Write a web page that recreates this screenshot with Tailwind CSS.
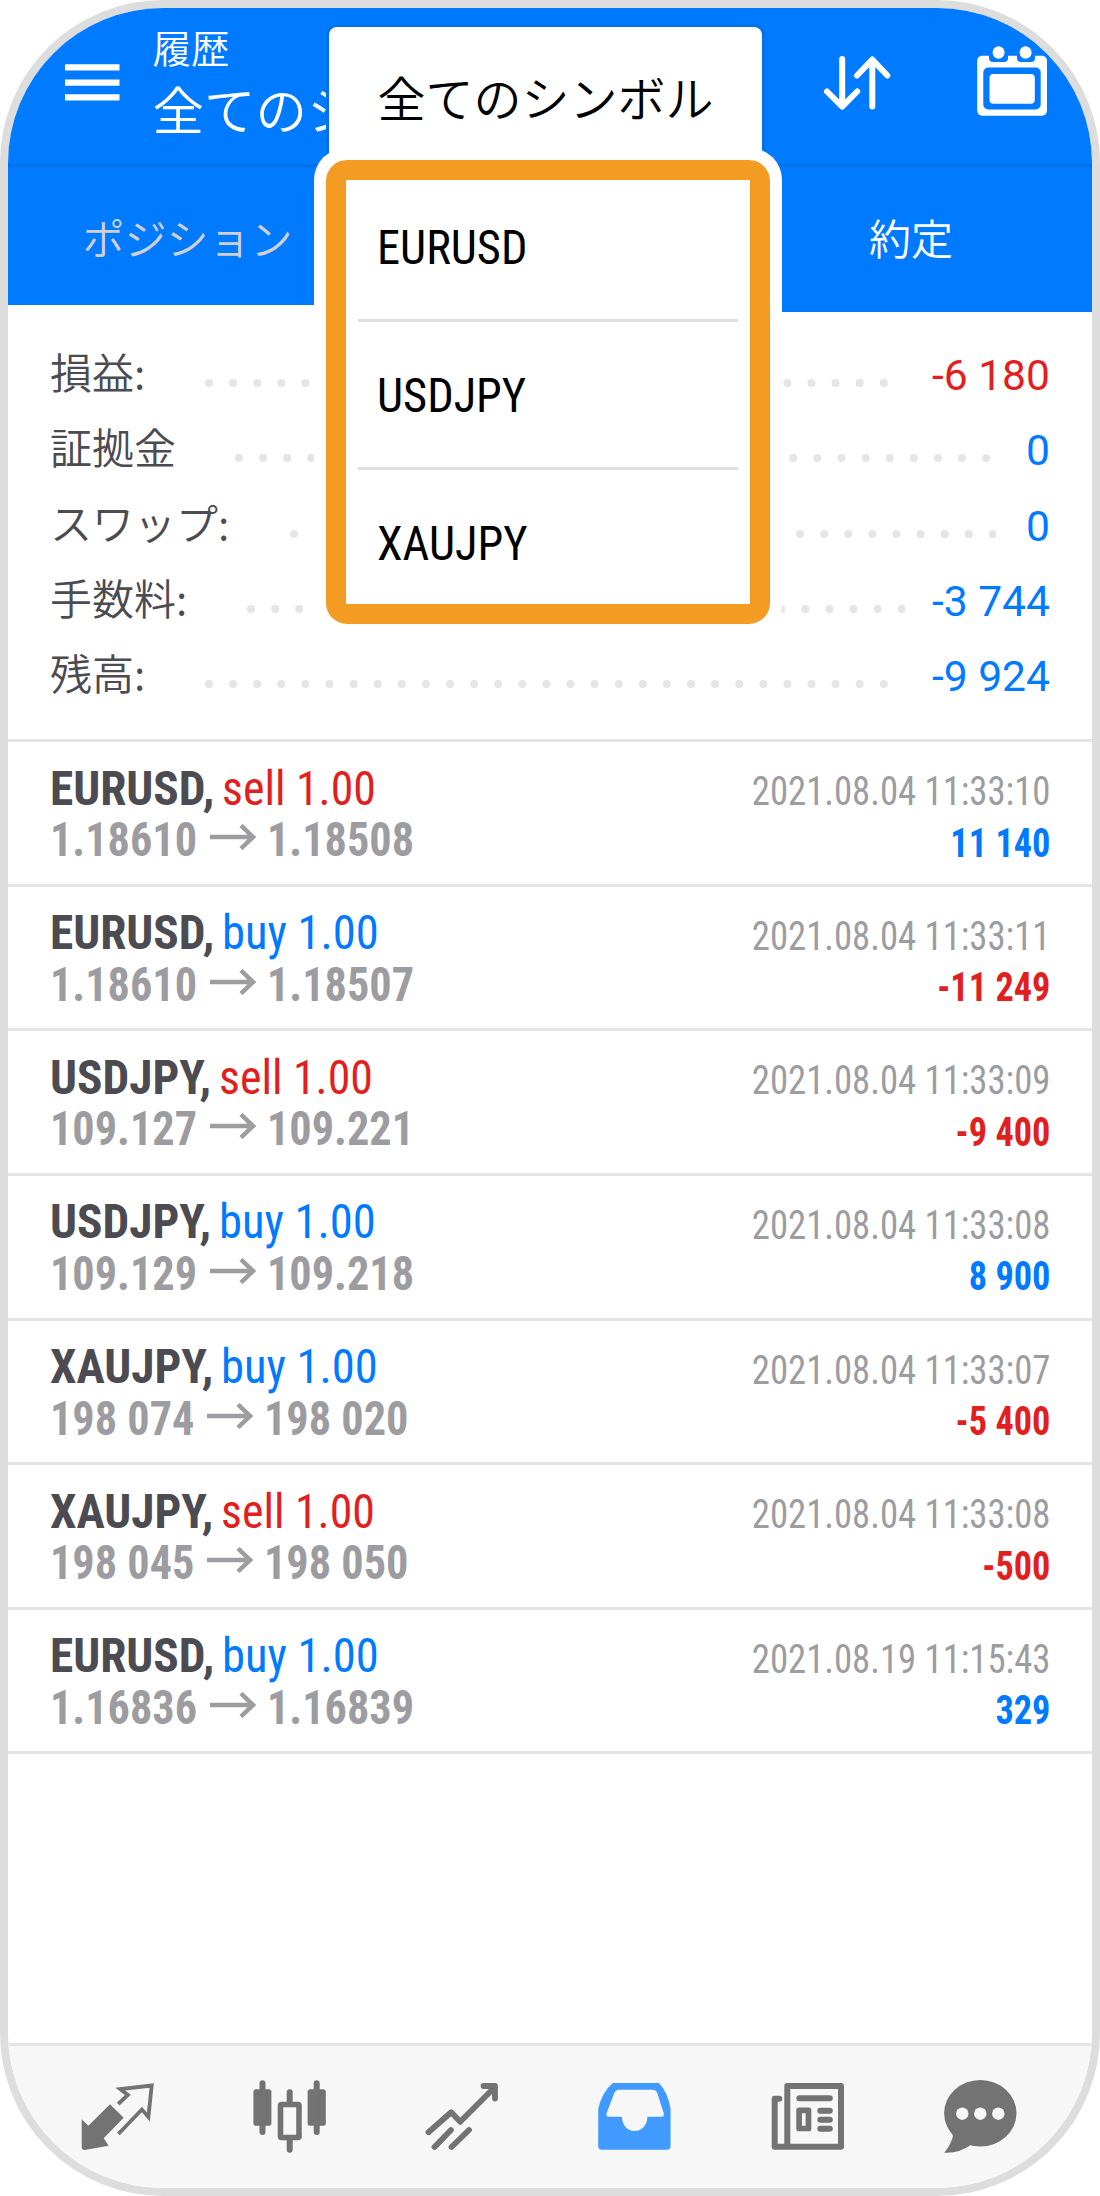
<!DOCTYPE html>
<html lang="ja">
<head>
<meta charset="utf-8">
<title>履歴</title>
<script src="https://cdn.jsdelivr.net/npm/@tailwindcss/browser@4"></script>
</head>
<body class="bg-white font-['Roboto','Noto_Sans_CJK_JP',sans-serif]">
<div class="relative flex h-[2196px] w-[1100px] flex-col overflow-hidden rounded-[163px] border-8 border-[#ddd] bg-white">

  <header class="flex h-[159px] shrink-0 border-b-3 border-[#0072ea] bg-[#007aff] text-white">
    <svg class="mt-[56px] ml-[57px] h-[38px] w-[55px] shrink-0" viewBox="0 0 55 38" fill="#fff"><path d="M0 .3h54.500v6.200H0zM0 15.500h54.500v6.200H0zM0 30.300h54.500v6.200H0z"/></svg>
    <div class="ml-[32.500px] flex w-[681.500px] flex-col pt-[12px] font-['Noto_Sans_CJK_JP',sans-serif] font-[350] whitespace-nowrap">
      <div class="h-[52px] text-[38.5px] leading-[52px]">履歴</div>
      <div class="mt-[2px] h-[68px] text-[51.5px] leading-[68px]">全てのシンボル</div>
    </div>
    <svg class="mt-[36px] ml-[-18px] h-[80px] w-[80px] shrink-0" viewBox="816 44 80 80" fill="none" stroke="#fff" stroke-width="6" stroke-linecap="round" stroke-linejoin="round"><path d="M842.2 59v46.500M827 91.500l15.200 15.200 15-15.200M872.300 106.500V60M857 75.500l15.300-16 15 16"/></svg>
    <svg class="mt-[32px] ml-[76px] h-[80px] w-[80px] shrink-0" viewBox="972 40 80 80">
      <rect x="977.200" y="55.700" width="69.800" height="60" rx="5" fill="#fff"/>
      <path d="M989 52h19v6q0 4-4 4h-11q-4 0-4-4zM1017 52h18v6q0 4-4 4h-10q-4 0-4-4z" fill="#007aff"/>
      <ellipse cx="998.600" cy="52.500" rx="6" ry="6.200" fill="#fff"/><ellipse cx="1025.600" cy="52.500" rx="6" ry="6.200" fill="#fff"/>
      <rect x="983.300" y="67.500" width="57.400" height="42" rx="5" fill="#007aff"/>
      <rect x="989.500" y="74" width="45.300" height="29.700" rx="4" fill="#fff"/>
    </svg>
  </header>

  <nav class="flex h-[145px] shrink-0 text-[42px] leading-[147px] font-[350]">
    <div class="h-[138px] w-[362px] bg-[#007aff] pr-[3px] text-center text-[#d0d0d0]">ポジション</div>
    <div class="ml-auto h-[145px] w-[362px] bg-[#007aff] text-center text-white">約定</div>
  </nav>

  <section id="summary" class="flex h-[427px] shrink-0 flex-col pt-[21px] pr-[42px] pl-[42px]"></section>
  <section id="deals"></section>

  <footer class="mt-auto grid h-[145px] shrink-0 grid-cols-6 justify-items-center border-t-3 border-[#e5e5e5] bg-[#f7f7f7] pt-[30px] pr-[25.3px] pl-[23px] text-[#737373]">
    <svg class="size-20" viewBox="77.300 2076 80 80" fill="currentColor"><path d="M82 2119.300l6.700 6.400 21.600-21.400 13.700 13.400-20 20.600 5 7.400-24 4.300q-3 0-3-3z"/><path d="M118.500 2104l9.700-9-7.700-6 31.500-3.500-3.300 31.500-6.500-7.500-23.500 24.500" fill="none" stroke="currentColor" stroke-width="3.800"/></svg>
    <svg class="size-20" viewBox="249.900 2076 80 80" fill="currentColor"><rect x="253.300" y="2089.300" width="18" height="36.500" rx="2.500"/><rect x="307.500" y="2089.300" width="18.200" height="36.500" rx="2.500"/><path d="M262.400 2083.300v48.700M316.600 2083.300v48.700M289.600 2092.300v10M289.600 2139v10.700" stroke="currentColor" stroke-width="6" stroke-linecap="round"/><rect x="280.400" y="2104.500" width="18.500" height="33" rx="1" fill="none" stroke="currentColor" stroke-width="5.600"/></svg>
    <svg class="size-20" viewBox="422.500 2076 80 80" fill="none" stroke="currentColor" stroke-width="5.800" stroke-linecap="round" stroke-linejoin="round"><path d="M428 2132.300l22.700-20 9 9.500 34-34M483 2086h11.500v12.500M434 2147l16.500-17M451 2147l17.500-17"/></svg>
    <svg class="size-20" viewBox="595.100 2076 80 80"><path fill="#419bff" fill-rule="evenodd" d="M613 2083h46q9 9 11.700 26v37q0 3.700-3.700 3.700h-65q-3.700 0-3.700-3.700v-37q3.700-17 14.700-26zM619 2089.700q-3 0-4.500 3l-7.800 20.500q-.7 3.500 2.300 3.500h13c0 8 5.500 14.300 12.700 14.300s12.800-6.300 12.800-14.300h14q3 0 2.300-3.500l-6.500-20.500q-1.500-3-4.800-3z"/></svg>
    <svg class="size-20" viewBox="767.700 2076 80 80" fill="none" stroke="currentColor" stroke-width="6" stroke-linecap="round" stroke-linejoin="round"><path d="M787 2086h53.700v60.700H787zM779 2098.700h-4.600v48H787"/><path d="M799 2098.300h30.500M820 2110.700h9.500M820 2119.700h9.500M820 2128.700h9.500"/><path d="M798.800 2110.300h9.400v18.200h-9.400z" stroke-width="5.700"/></svg>
    <svg class="size-20" viewBox="940.400 2076 80 80" fill="currentColor"><ellipse cx="980.700" cy="2113.300" rx="36.200" ry="33.300"/><path d="M951 2131q4 4 .5 10.500-2 5.500-6.800 11.200 14 1 26.500-7.700l4-12z"/><g fill="#f7f7f7"><circle cx="962.700" cy="2113.700" r="6.200"/><circle cx="980.700" cy="2113.700" r="6.200"/><circle cx="998.700" cy="2113.700" r="6.200"/></g></svg>
  </footer>

  <!-- symbol picker -->
  <div class="absolute top-[19px] left-[306px] w-[468px]">
    <div class="mx-[14.500px] h-[140px] w-[433.500px] rounded-t-[8px] bg-white pl-[49px] font-['Noto_Sans_CJK_JP',sans-serif] text-[48px] leading-[139px] font-[350] whitespace-nowrap text-black shadow-[0_0_0_3px_#0072ea]">全てのシンボル</div>
    <div class="relative -mt-[19px] h-[488px] rounded-[32px] bg-white p-3">
      <div class="h-[464px] rounded-[21px] border-20 border-[#f39b23] bg-white px-3 font-['Roboto_Condensed'] text-[48px] text-black">
        <div class="h-[142px] border-b-3 border-[#dfdfdf] pl-[19px] leading-[136px]"><span class="inline-block origin-left scale-x-[0.967]">EURUSD</span></div>
        <div class="h-[147.500px] border-b-3 border-[#dfdfdf] pl-[19px] leading-[147px]"><span class="inline-block origin-left scale-x-[0.967]">USDJPY</span></div>
        <div class="pl-[19px] leading-[147px]"><span class="inline-block origin-left scale-x-[0.967]">XAUJPY</span></div>
      </div>
    </div>
  </div>
</div>
<script>
const BLUE = 'text-[#007aff]', RED = 'text-[#e21f1f]';
const totals = [
  ['損益:', '-6 180', RED, 208.7, 883.6],
  ['証拠金', '0', BLUE, 239.1, 985.6],
  ['スワップ:', '0', BLUE, 293.6, 992],
  ['手数料:', '-3 744', BLUE, 251.2, 901.5],
  ['残高:', '-9 924', BLUE, 208.7, 883.6],
];
document.getElementById('summary').innerHTML = totals.map(([label, value, color, a, b]) => `
  <div class="flex h-[75.3px] shrink-0 text-[42px] leading-[75px]">
    <div class="shrink-0 font-['Noto_Sans_CJK_JP',sans-serif] font-[350] whitespace-nowrap text-[#4b4b51]" style="width:${a - 54}px">${label}</div>
    <svg class="mt-[46px] h-2 shrink-0" width="${b - a + 8}" height="8"><path d="M4 4h${b - a + 1}" stroke="#e5e5e5" stroke-width="8" stroke-linecap="round" stroke-dasharray="0 24.100"/></svg>
    <div class="ml-auto pt-[5px] text-[42.600px] whitespace-nowrap ${color}">${value}</div>
  </div>`).join('');

const deals = [
  ['EURUSD', 'sell', '1.18610', '1.18508', '2021.08.04 11:33:10', '11 140'],
  ['EURUSD', 'buy', '1.18610', '1.18507', '2021.08.04 11:33:11', '-11 249'],
  ['USDJPY', 'sell', '109.127', '109.221', '2021.08.04 11:33:09', '-9 400'],
  ['USDJPY', 'buy', '109.129', '109.218', '2021.08.04 11:33:08', '8 900'],
  ['XAUJPY', 'buy', '198 074', '198 020', '2021.08.04 11:33:07', '-5 400'],
  ['XAUJPY', 'sell', '198 045', '198 050', '2021.08.04 11:33:08', '-500'],
  ['EURUSD', 'buy', '1.16836', '1.16839', '2021.08.19 11:15:43', '329'],
];
document.getElementById('deals').innerHTML = deals.map(([sym, side, from, to, time, profit]) => `
  <div class="flex h-[144.650px] justify-between border-t-3 border-[#e5e5e5] pr-[41.600px] pl-[42px] font-['Roboto_Condensed'] leading-[51.500px] whitespace-nowrap">
    <div class="pt-[20.500px] text-[48px]">
      <div class="flex"><b class="origin-left scale-x-[0.985] text-[#4b4b51]">${sym},</b><span class="ml-[5.600px] origin-left ${side === 'buy' ? 'scale-x-[0.97] ' + BLUE : 'scale-x-[0.955] ' + RED}">${side} 1.00</span></div>
      <div class="flex font-bold text-[#9c9ca1]"><span class="origin-left scale-x-[0.922]">${from}</span>
        <svg class="mt-[10px] mr-[11.500px] h-[26px] w-[46px]" viewBox="0 0 46 26" fill="none" stroke="currentColor" stroke-width="4.500"><path d="M0 13h43M31 1.500l12 11.500-12 11.500"/></svg>
        <span class="origin-left scale-x-[0.922]">${to}</span></div>
    </div>
    <div class="pt-[24px] text-right text-[40px]">
      <div class="origin-right scale-x-[0.9175] text-[#9c9ca1]">${time}</div>
      <div class="origin-right scale-x-[0.907] font-bold ${profit[0] === '-' ? RED : BLUE}">${profit}</div>
    </div>
  </div>`).join('') + '<div class="border-t-3 border-[#e5e5e5]"></div>';
</script>
</body>
</html>
